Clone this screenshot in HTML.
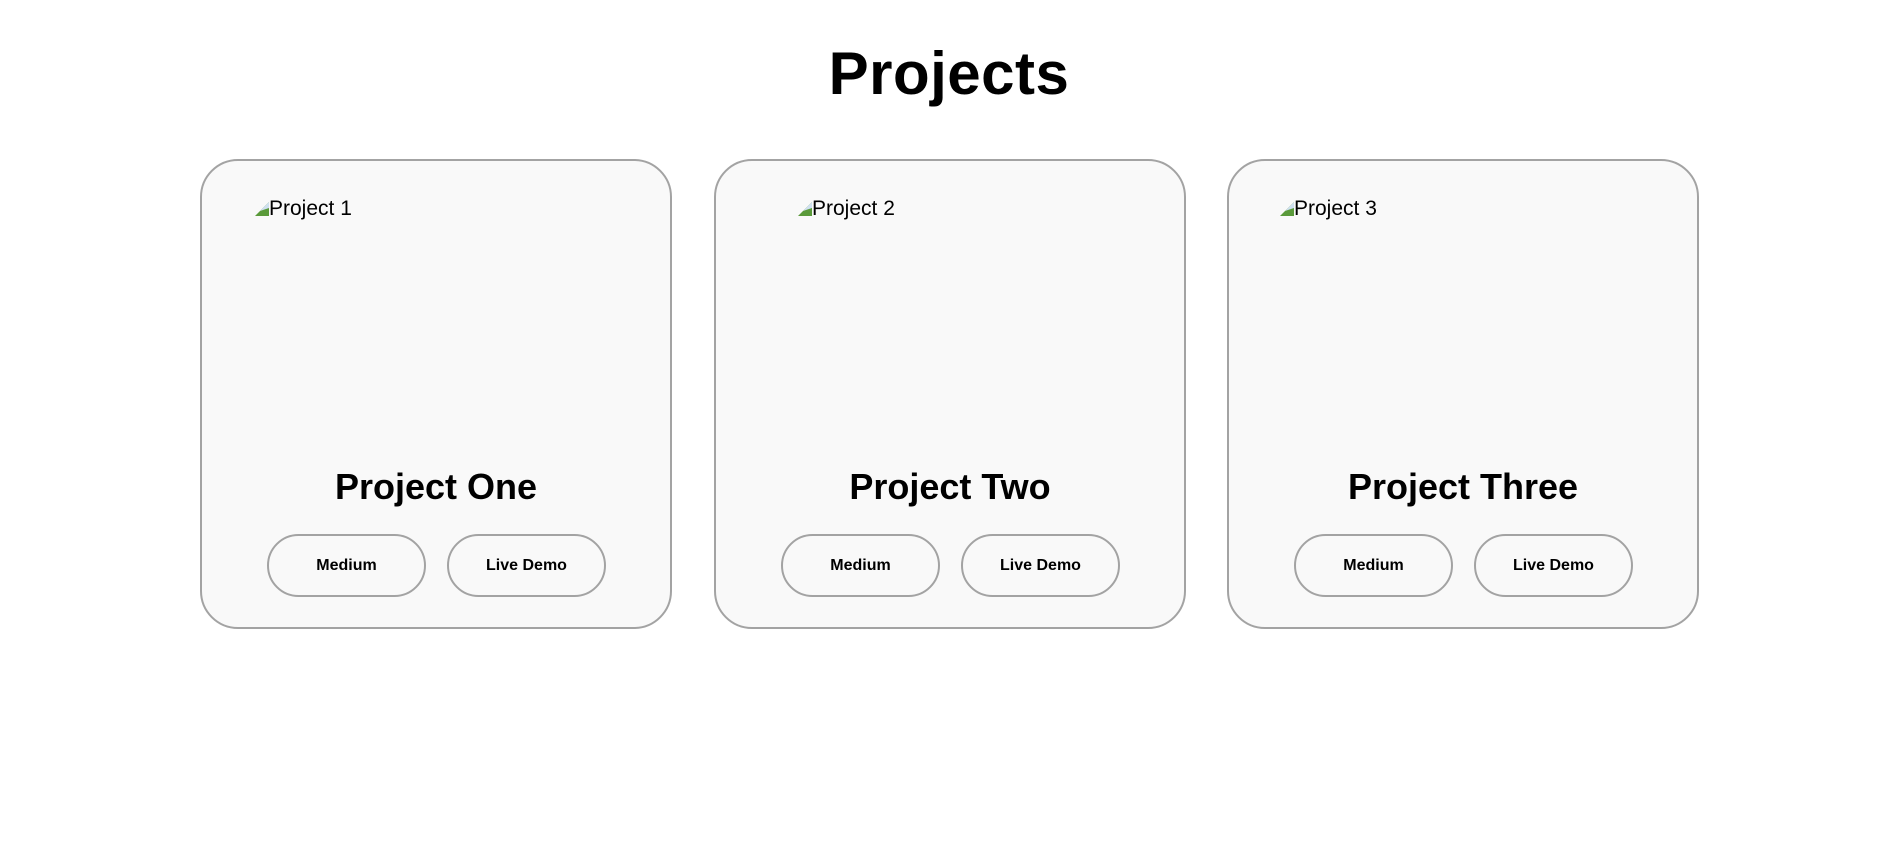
<!DOCTYPE html>
<html><head><meta charset="utf-8"><style>
html,body{margin:0;padding:0;background:#fff;width:1898px;height:849px;overflow:hidden;font-family:"Liberation Sans",sans-serif;color:#000}
h1{position:absolute;left:0;width:1898px;top:34px;margin:0;text-align:center;font-size:60px;font-weight:bold;line-height:80px;letter-spacing:0.5px}
.card{position:absolute;top:159px;width:468px;height:466px;border:2px solid #a3a3a3;border-radius:38px;background:#f9f9f9}
.alt{position:absolute;top:35px;font-size:21px;line-height:26px;white-space:nowrap}
.alt svg{vertical-align:-1px}
.title{position:absolute;left:0;width:468px;top:304px;text-align:center;font-size:36px;font-weight:bold;line-height:44px}
.btn{position:absolute;top:373px;width:155px;height:59px;border:2px solid #a3a3a3;border-radius:32px;text-align:center;line-height:59px;font-size:16px;font-weight:bold}
</style></head><body>
<h1>Projects</h1>
<div class="card" style="left:200px">
<div class="alt" style="left:53px"><svg width="14" height="14"><path d="M0 14L14 0V14Z" fill="#5a9a3a"/><path d="M5 9L14 0V6Z" fill="#cfe0f0"/></svg>Project 1</div>
<div class="title">Project One</div>
<div class="btn" style="left:65px">Medium</div>
<div class="btn" style="left:245px">Live Demo</div>
</div>
<div class="card" style="left:714px">
<div class="alt" style="left:82px"><svg width="14" height="14"><path d="M0 14L14 0V14Z" fill="#5a9a3a"/><path d="M5 9L14 0V6Z" fill="#cfe0f0"/></svg>Project 2</div>
<div class="title">Project Two</div>
<div class="btn" style="left:65px">Medium</div>
<div class="btn" style="left:245px">Live Demo</div>
</div>
<div class="card" style="left:1227px">
<div class="alt" style="left:51px"><svg width="14" height="14"><path d="M0 14L14 0V14Z" fill="#5a9a3a"/><path d="M5 9L14 0V6Z" fill="#cfe0f0"/></svg>Project 3</div>
<div class="title">Project Three</div>
<div class="btn" style="left:65px">Medium</div>
<div class="btn" style="left:245px">Live Demo</div>
</div>
</body></html>
